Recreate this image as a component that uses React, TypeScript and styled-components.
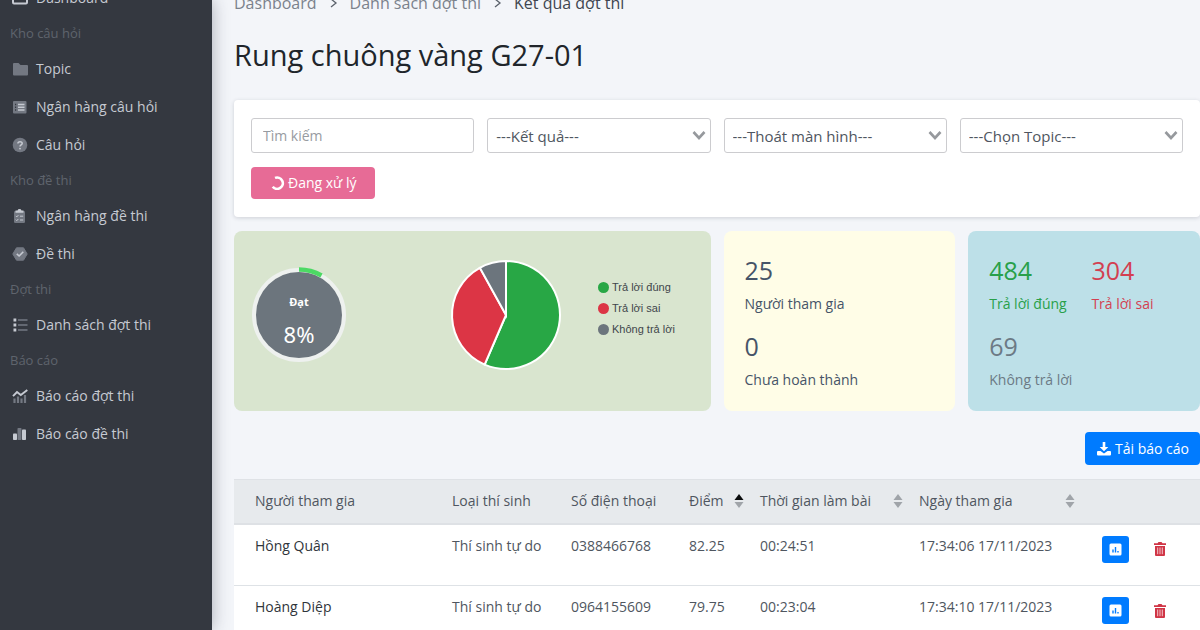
import React from "react";
import styled, { createGlobalStyle } from "styled-components";

const GlobalStyle = createGlobalStyle`
  *, *::before, *::after { box-sizing: border-box; }
  body {
    margin: 0;
    background: #f3f5f9;
    color: #4f5660;
    font: 14px/20px "Open Sans", "Noto Sans", sans-serif;
  }
  button, input, select { font: inherit; margin: 0; }
`;

const Shell = styled.div`
  display: flex;
  height: 100vh;
  overflow: hidden;
`;

const Sidebar = styled.nav`
  flex: 0 0 212px;
  background: #343840;
  box-shadow: 0 0 16px rgba(40, 42, 60, 0.36);
  z-index: 1;
`;

const Menu = styled.ul`
  list-style: none;
  margin: -21px 0 0;
  padding: 0 0 0 10px;
`;

const MenuHeading = styled.li`
  height: 33px;
  line-height: 33px;
  font-size: 13px;
  color: #5f646d;
`;

const MenuLink = styled.a`
  display: flex;
  align-items: center;
  gap: 7px;
  height: 38px;
  padding-left: 1px;
  color: #c6cad2;
  text-decoration: none;
`;

const Main = styled.main`
  flex: 1;
  min-width: 0;
  padding-left: 22px;
`;

const Breadcrumb = styled.ol`
  display: flex;
  align-items: center;
  list-style: none;
  margin: -7px 0 0;
  padding: 0;
  font-size: 16px;
  color: #3f4650;

  a { color: #7b828c; text-decoration: none; }
  svg { display: block; margin: 0 12px; }
`;

const Title = styled.h1`
  margin: 23px 0 26px;
  font-size: 29px;
  line-height: 38px;
  font-weight: 400;
  color: #20252b;
`;

const FilterCard = styled.form`
  display: grid;
  grid-template-columns: repeat(4, 1fr);
  gap: 14px 13px;
  padding: 18px 17px;
  background: #fff;
  border-radius: 4px;
  box-shadow: 0 1px 4px rgba(40, 42, 60, 0.18);
`;

const Search = styled.input`
  width: 100%;
  height: 35px;
  padding: 0 11px;
  border: 1px solid #cccccf;
  border-radius: 3px;
  color: #4f5660;
  &::placeholder { color: #979ba1; opacity: 1; }
`;

const SelectBox = styled.div`
  position: relative;
  height: 35px;
  svg { position: absolute; right: 5px; top: 12px; pointer-events: none; }
`;

const Select = styled.select`
  appearance: none;
  width: 100%;
  height: 35px;
  padding: 0 24px 0 8px;
  border: 1px solid #cccccf;
  border-radius: 3px;
  background: #fff;
  font-size: 15px;
  color: #4f5660;
`;

const Button = styled.button<{ $tone: string }>`
  display: inline-flex;
  align-items: center;
  justify-content: center;
  gap: 3px;
  height: 33px;
  padding: 0 11px;
  border: 0;
  border-radius: 4px;
  background: ${(p) => p.$tone};
  color: #fff;
  white-space: nowrap;
`;

const BusyButton = styled(Button)`
  justify-self: start;
  height: 32px;
  padding: 0 18px 0 20px;
`;

const Cards = styled.section`
  display: grid;
  grid-template-columns: repeat(4, 1fr);
  gap: 13px;
  margin-top: 14px;
`;

const Card = styled.div<{ $bg: string }>`
  height: 180px;
  border-radius: 8px;
  background: ${(p) => p.$bg};
`;

const ChartCard = styled(Card)`
  grid-column: span 2;
  display: flex;
  align-items: center;
  padding: 0 15px 12px;
`;

const PieWrap = styled.div`
  display: flex;
  margin-left: 101px;
`;

const Legend = styled.ul`
  list-style: none;
  margin: 0 0 14px 36px;
  padding: 0;
  font: 11px/21px "Liberation Sans", Arial, sans-serif;
  color: #3f454b;
`;

const LegendItem = styled.li<{ $dot: string }>`
  display: flex;
  align-items: center;
  gap: 3px;
  white-space: nowrap;
  &::before {
    content: "";
    width: 11px;
    height: 11px;
    border-radius: 50%;
    background: ${(p) => p.$dot};
  }
`;

const StatCard = styled(Card)`
  display: grid;
  grid-template-columns: auto 1fr;
  grid-auto-rows: 76px;
  column-gap: 19px;
  padding: 20px 21px;
`;

const Stat = styled.div<{ $color: string }>`
  color: ${(p) => p.$color};
  white-space: nowrap;
`;

const StatValue = styled.div`
  font-size: 25px;
  line-height: 38px;
`;

const StatLabel = styled.div`
  padding-top: 5px;
`;

const Actions = styled.div`
  display: flex;
  justify-content: flex-end;
  margin: 21px 0 14px;
`;

const Table = styled.table`
  width: 100%;
  table-layout: fixed;
  border-collapse: collapse;
  background: #fff;
`;

const Th = styled.th`
  height: 44px;
  padding: 0 4px 0 12px;
  background: #e7eaed;
  border-top: 1px solid #dfe2e6;
  border-bottom: 2px solid #dee1e5;
  font-weight: 400;
  text-align: left;
  white-space: nowrap;
  &:first-child { padding-left: 21px; }
`;

const ThInner = styled.div`
  display: flex;
  align-items: center;
  justify-content: space-between;
`;

const Td = styled.td`
  height: 62px;
  padding: 11px 0 0 12px;
  border-bottom: 1px solid #dee2e6;
  vertical-align: top;
  white-space: nowrap;
  &:first-child { padding-left: 21px; color: #30353b; }
`;

const RowActions = styled.div`
  display: flex;
  gap: 17px;
  padding-left: 11px;
`;

const IconButton = styled.button<{ $bg?: string }>`
  display: grid;
  place-items: center;
  width: 27px;
  height: 27px;
  padding: 0;
  border: 0;
  border-radius: 3px;
  background: ${(p) => p.$bg ?? "transparent"};
`;

const DIM = "#737882";
const LIT = "#c6cad2";

const icons: Record<string, React.ReactNode> = {
  home: (
    <>
      <rect x="2" y="3" width="14" height="11.5" rx="1" fill="none" stroke={LIT} strokeWidth="2" />
      <path d="M9 6v5M5 9h8" stroke={LIT} strokeWidth="1.4" />
    </>
  ),
  folder: <path d="M2 4a1 1 0 0 1 1-1h4.500l2 2H16a1 1 0 0 1 1 1v8.500a1 1 0 0 1-1 1H3a1 1 0 0 1-1-1z" fill={DIM} />,
  list: (
    <>
      <rect x="2" y="3" width="13.500" height="12.500" rx="1" fill={DIM} />
      <path d="M7 6.500h6.500M7 9.200h6.500M7 12h6.500" stroke={LIT} strokeWidth="1.500" />
      <path d="M4 6.500h1.200M4 9.200h1.200M4 12h1.200" stroke="#343840" strokeWidth="1.400" />
    </>
  ),
  question: (
    <>
      <circle cx="9" cy="9" r="7.300" fill={DIM} />
      <path d="M6.900 7.500C6.900 5.200 11.200 5.200 11.200 7.400C11.200 8.900 9 8.800 9 10.600" fill="none" stroke={LIT} strokeWidth="1.500" />
      <circle cx="9" cy="12.600" r="0.900" fill={LIT} />
    </>
  ),
  clipboard: (
    <>
      <rect x="3" y="4" width="11" height="12" rx="1.200" fill={DIM} />
      <path d="M4.500 5.800V3.400h2a2.100 2.100 0 0 1 4 0h2v2.400z" fill={LIT} />
      <path d="M4.800 8.900l1 1 1.500-1.700M4.800 12.700l1 1 1.500-1.700M9 9.200h3.200M9 13h3.200" fill="none" stroke={LIT} strokeWidth="1" />
    </>
  ),
  badge: (
    <>
      <path d="M5.500 2.800h7l3.700 6.200-3.700 6.200h-7L1.800 9z" fill={DIM} stroke={DIM} strokeWidth="1" strokeLinejoin="round" />
      <path d="M5.800 8.800l2.300 2.200 4.200-4.200" fill="none" stroke={LIT} strokeWidth="1.600" />
    </>
  ),
  bullets: (
    <>
      <path d="M7 4h9.500M7 9h9.500M7 14h9.500" stroke={DIM} strokeWidth="1.600" />
      <path d="M2.500 4h2.800M2.500 9h2.800M2.500 14h2.800" stroke={LIT} strokeWidth="2.800" />
    </>
  ),
  trend: (
    <>
      <path d="M3.500 11.500v4.500M7 9.500V16M10.500 11.500V16M14 8v8" stroke={DIM} strokeWidth="2.200" />
      <path d="M2 9.200l4-4.200 3.800 3 6.500-5" fill="none" stroke={LIT} strokeWidth="1.900" />
    </>
  ),
  bars: (
    <>
      <rect x="2" y="8.500" width="4" height="6.500" rx="0.800" fill={LIT} />
      <rect x="6.500" y="3" width="4" height="12" rx="0.800" fill={DIM} />
      <rect x="11" y="4.500" width="4" height="10.500" rx="0.800" fill={LIT} />
    </>
  ),
};

type Entry = { heading: string } | { icon: string; label: string };

const menu: Entry[] = [
  { icon: "home", label: "Dashboard" },
  { heading: "Kho câu hỏi" },
  { icon: "folder", label: "Topic" },
  { icon: "list", label: "Ngân hàng câu hỏi" },
  { icon: "question", label: "Câu hỏi" },
  { heading: "Kho đề thi" },
  { icon: "clipboard", label: "Ngân hàng đề thi" },
  { icon: "badge", label: "Đề thi" },
  { heading: "Đợt thi" },
  { icon: "bullets", label: "Danh sách đợt thi" },
  { heading: "Báo cáo" },
  { icon: "trend", label: "Báo cáo đợt thi" },
  { icon: "bars", label: "Báo cáo đề thi" },
];

const Crumb = () => (
  <svg width="9" height="12" viewBox="0 0 9 12" aria-hidden="true">
    <path d="M2 2l5 4-5 4" fill="none" stroke="#5b626c" strokeWidth="1.300" />
  </svg>
);

const Sort = ({ up = "#a0a4a9" }: { up?: string }) => (
  <svg width="10" height="14" viewBox="0 0 10 14" aria-hidden="true">
    <path d="M5 0l4.500 6h-9z" fill={up} />
    <path d="M5 14l4.500-6h-9z" fill="#a0a4a9" />
  </svg>
);

const Dropdown = ({ label, text }: { label: string; text: string }) => (
  <SelectBox>
    <Select aria-label={label}>
      <option>{text}</option>
    </Select>
    <svg width="14" height="11" viewBox="0 0 14 11" aria-hidden="true">
      <path d="M1.500 2l5.500 6 5.500-6" fill="none" stroke="#96999d" strokeWidth="2.600" />
    </svg>
  </SelectBox>
);

const Gauge = () => (
  <svg width="100" height="100" viewBox="0 0 100 100" role="img" aria-label="Đạt 8%">
    <circle cx="50" cy="50" r="45" fill="#6c757d" stroke="#eef1ef" strokeWidth="4" />
    <path d="M50 4.500A45.500 45.500 0 0 1 72.500 10.500" fill="none" stroke="#4cd964" strokeWidth="4.500" />
    <text x="50" y="41" textAnchor="middle" fontFamily="Noto Sans, sans-serif" fontSize="11" fontWeight="700" fill="#fff">Đạt</text>
    <text x="50" y="78" textAnchor="middle" fontFamily="Noto Sans, sans-serif" fontSize="22" fill="#fff">8%</text>
  </svg>
);

const slices = [
  { label: "Trả lời đúng", value: 484, color: "#28a745" },
  { label: "Trả lời sai", value: 304, color: "#dc3545" },
  { label: "Không trả lời", value: 69, color: "#6c757d" },
];

const Pie = () => {
  const total = slices.reduce((sum, s) => sum + s.value, 0);
  let turn = 0;
  const point = (t: number) => `${56 + 54 * Math.sin(t * 2 * Math.PI)} ${56 - 54 * Math.cos(t * 2 * Math.PI)}`;
  return (
    <svg width="112" height="112" viewBox="0 0 112 112" role="img" aria-label="Kết quả trả lời">
      {slices.map((s) => {
        const from = turn;
        turn += s.value / total;
        return (
          <path
            key={s.label}
            d={`M56 56L${point(from)}A54 54 0 ${turn - from > 0.5 ? 1 : 0} 1 ${point(turn)}Z`}
            fill={s.color}
            stroke="#fff"
            strokeWidth="2"
          />
        );
      })}
    </svg>
  );
};

const rows = [
  ["Hồng Quân", "Thí sinh tự do", "0388466768", "82.25", "00:24:51", "17:34:06 17/11/2023"],
  ["Hoàng Diệp", "Thí sinh tự do", "0964155609", "79.75", "00:23:04", "17:34:10 17/11/2023"],
];

const columns: { name: string; sort?: string }[] = [
  { name: "Người tham gia" },
  { name: "Loại thí sinh" },
  { name: "Số điện thoại" },
  { name: "Điểm", sort: "#0b0c0d" },
  { name: "Thời gian làm bài", sort: "#a0a4a9" },
  { name: "Ngày tham gia", sort: "#a0a4a9" },
];

const Cols = styled.col<{ $w?: number }>`
  width: ${(p) => (p.$w ? `${p.$w}px` : "auto")};
`;

export default function App() {
  return (
    <>
      <GlobalStyle />
      <Shell>
        <Sidebar>
          <Menu>
            {menu.map((m) =>
              "heading" in m ? (
                <MenuHeading key={m.heading}>{m.heading}</MenuHeading>
              ) : (
                <li key={m.label}>
                  <MenuLink href="#">
                    <svg width="18" height="18" viewBox="0 0 18 18" aria-hidden="true">{icons[m.icon]}</svg>
                    {m.label}
                  </MenuLink>
                </li>
              )
            )}
          </Menu>
        </Sidebar>
        <Main>
          <Breadcrumb>
            <li><a href="#">Dashboard</a></li>
            <li><Crumb /></li>
            <li><a href="#">Danh sách đợt thi</a></li>
            <li><Crumb /></li>
            <li>Kết quả đợt thi</li>
          </Breadcrumb>
          <Title>Rung chuông vàng G27-01</Title>

          <FilterCard>
            <Search type="text" placeholder="Tìm kiếm" aria-label="Tìm kiếm" />
            <Dropdown label="Kết quả" text="---Kết quả---" />
            <Dropdown label="Thoát màn hình" text="---Thoát màn hình---" />
            <Dropdown label="Chọn Topic" text="---Chọn Topic---" />
            <BusyButton type="button" $tone="#e76b96">
              <svg width="14" height="14" viewBox="0 0 14 14" aria-hidden="true">
                <path d="M4 1.900A5.700 5.700 0 1 1 1.700 10.800" fill="none" stroke="#fff" strokeWidth="2.600" />
              </svg>
              Đang xử lý
            </BusyButton>
          </FilterCard>

          <Cards>
            <ChartCard $bg="#d9e5cf">
              <Gauge />
              <PieWrap><Pie /></PieWrap>
              <Legend>
                {slices.map((s) => (
                  <LegendItem key={s.label} $dot={s.color}>{s.label}</LegendItem>
                ))}
              </Legend>
            </ChartCard>
            <StatCard $bg="#fffde7">
              <Stat $color="#465468">
                <StatValue>25</StatValue>
                <StatLabel>Người tham gia</StatLabel>
              </Stat>
              <span />
              <Stat $color="#465468">
                <StatValue>0</StatValue>
                <StatLabel>Chưa hoàn thành</StatLabel>
              </Stat>
            </StatCard>
            <StatCard $bg="#bde0e8">
              <Stat $color="#28a04a">
                <StatValue>484</StatValue>
                <StatLabel>Trả lời đúng</StatLabel>
              </Stat>
              <Stat $color="#d33f51">
                <StatValue>304</StatValue>
                <StatLabel>Trả lời sai</StatLabel>
              </Stat>
              <Stat $color="#6c7a85">
                <StatValue>69</StatValue>
                <StatLabel>Không trả lời</StatLabel>
              </Stat>
            </StatCard>
          </Cards>

          <Actions>
            <Button type="button" $tone="#007bff">
              <svg width="16" height="16" viewBox="0 0 16 16" aria-hidden="true">
                <path d="M6.700 1h2.600v5h3L8 10.300 3.700 6h3z" fill="#fff" />
                <path d="M2 10h2.500L8 12.500l3.500-2.500H14a1 1 0 0 1 1 1v2.500a1 1 0 0 1-1 1H2a1 1 0 0 1-1-1V11a1 1 0 0 1 1-1z" fill="#fff" />
              </svg>
              Tải báo cáo
            </Button>
          </Actions>

          <Table>
            <colgroup>
              <Cols />
              <Cols $w={119} />
              <Cols $w={118} />
              <Cols $w={71} />
              <Cols $w={159} />
              <Cols $w={172} />
              <Cols $w={121} />
            </colgroup>
            <thead>
              <tr>
                {columns.map((c) => (
                  <Th key={c.name} scope="col">
                    <ThInner>
                      {c.name}
                      {c.sort && <Sort up={c.sort} />}
                    </ThInner>
                  </Th>
                ))}
                <Th aria-label="Thao tác" />
              </tr>
            </thead>
            <tbody>
              {rows.map((r) => (
                <tr key={r[0]}>
                  {r.map((cell) => <Td key={cell}>{cell}</Td>)}
                  <Td>
                    <RowActions>
                      <IconButton type="button" $bg="#007bff" aria-label="Xem báo cáo">
                        <svg width="13" height="13" viewBox="0 0 13 13" aria-hidden="true">
                          <rect x="0.500" y="0.500" width="12" height="12" rx="1.500" fill="#fff" />
                          <path d="M4 6.500v3M6.500 4v5.500M9 8v1.500" stroke="#007bff" strokeWidth="1.400" />
                        </svg>
                      </IconButton>
                      <IconButton type="button" aria-label="Xóa">
                        <svg width="14" height="16" viewBox="0 0 14 16" aria-hidden="true">
                          <path d="M1 2.200h3.500L5.500 1h3l1 1.200H13V4H1zM2 5h10v9a1 1 0 0 1-1 1H3a1 1 0 0 1-1-1z" fill="#d03546" />
                          <path d="M4.700 6.500v6.700M7 6.500v6.700M9.300 6.500v6.700" stroke="#f3c5ca" strokeWidth="1" />
                        </svg>
                      </IconButton>
                    </RowActions>
                  </Td>
                </tr>
              ))}
            </tbody>
          </Table>
        </Main>
      </Shell>
    </>
  );
}
